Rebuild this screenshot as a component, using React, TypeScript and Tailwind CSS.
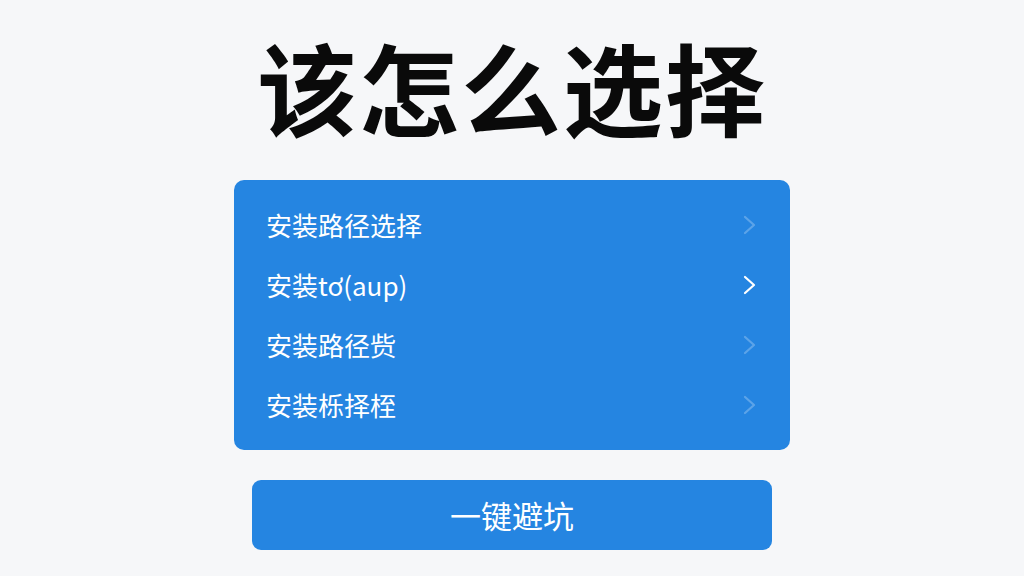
import React from "react";

const rows = [
  { label: "安装路径选择", active: false },
  { label: "安装tơ(aup)", active: true },
  { label: "安装路径赀", active: false },
  { label: "安装栎择桎", active: false },
];

function Chevron({ active }: { active: boolean }) {
  return (
    <svg
      width="16"
      height="22"
      viewBox="0 0 16 22"
      fill="none"
      className={active ? "opacity-100" : "opacity-25"}
    >
      <path d="M3 3 L12 11 L3 19" stroke="white" strokeWidth="2.2" strokeLinecap="round" strokeLinejoin="round" />
    </svg>
  );
}

export default function App() {
  return (
    <div
      className="w-[1024px] h-[576px] bg-[#f6f7f9] flex flex-col items-center overflow-hidden"
      style={{ fontFamily: '"Noto Sans CJK SC", "Noto Sans", sans-serif' }}
    >
      <h1 className="mt-[36px] h-[100px] text-[100px] leading-[100px] font-bold text-[#0a0a0a] tracking-[2px]">
        该怎么选择
      </h1>
      <div className="mt-[44px] w-[556px] rounded-[10px] bg-[#2585e1] py-[15px] pl-[32px] pr-[32px] flex flex-col">
        {rows.map((r) => (
          <div key={r.label} className="h-[60px] flex items-center justify-between">
            <span className="text-[26px] text-white leading-none">{r.label}</span>
            <Chevron active={r.active} />
          </div>
        ))}
      </div>
      <button className="mt-[30px] w-[520px] h-[70px] rounded-[9px] bg-[#2585e1] text-white text-[31px] flex items-center justify-center">
        一键避坑
      </button>
    </div>
  );
}
